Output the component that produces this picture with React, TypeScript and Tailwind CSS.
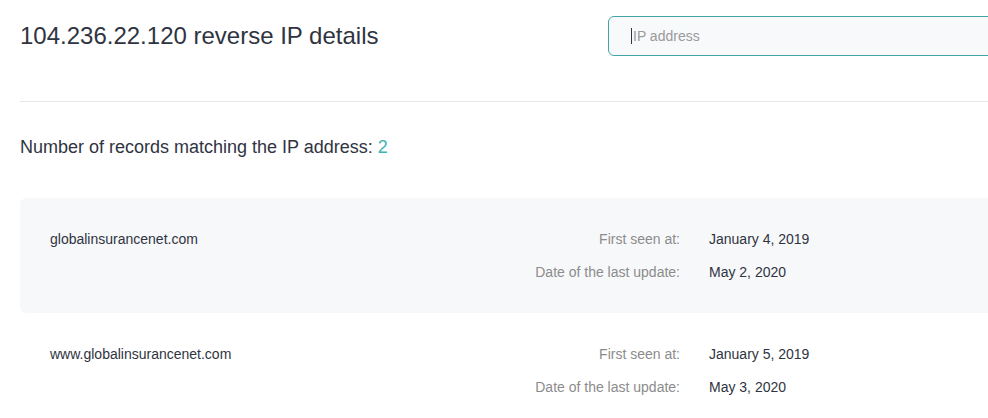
const records = [
  { domain: "globalinsurancenet.com", first: "January 4, 2019", last: "May 2, 2020", shaded: true },
  { domain: "www.globalinsurancenet.com", first: "January 5, 2019", last: "May 3, 2020", shaded: false },
];

export default function App() {
  return (
    <div className="w-[988px] h-[418px] overflow-hidden bg-white text-[#2f3441] font-['Liberation_Sans',Arial,sans-serif]">
      <div className="w-[1010px] pl-5">
        {/* HEADER */}
        <div className="flex items-start justify-between pt-4 pb-[45px] border-b border-[#e6e6e6]">
          <h1 className="text-[24px] leading-[40px] font-normal">104.236.22.120 reverse IP details</h1>
          <div className="w-[402px] h-10 rounded-md border border-[#42a5a4] bg-[#f8f9fb] flex items-center pl-[22px]">
            <span className="w-px h-4 bg-[#2f3441]" />
            <input
              className="flex-1 bg-transparent outline-none text-[14px] text-[#2f3441] placeholder:text-[#9a9a9a] pl-[1px]"
              placeholder="IP address"
            />
          </div>
        </div>

        {/* COUNT */}
        <p className="text-[18px] leading-[24px] pt-[33px] pb-[39px]">
          Number of records matching the IP address: <span className="text-[#3eb3b0]">2</span>
        </p>

        {/* RECORDS */}
        <div className="flex flex-col">
          {records.map((r) => (
            <div
              key={r.domain}
              className={`flex rounded-md pl-[30px] py-[31px] text-[14px] leading-[20px] ${r.shaded ? "bg-[#f7f8fa]" : "bg-white"}`}
            >
              <div className="w-[480px]">{r.domain}</div>
              <div className="flex flex-col gap-[13px]">
                <div className="flex">
                  <span className="w-[150px] text-right text-[#8c8c8c]">First seen at:</span>
                  <span className="pl-[29px]">{r.first}</span>
                </div>
                <div className="flex">
                  <span className="w-[150px] text-right text-[#8c8c8c]">Date of the last update:</span>
                  <span className="pl-[29px]">{r.last}</span>
                </div>
              </div>
            </div>
          ))}
        </div>
      </div>
    </div>
  );
}
